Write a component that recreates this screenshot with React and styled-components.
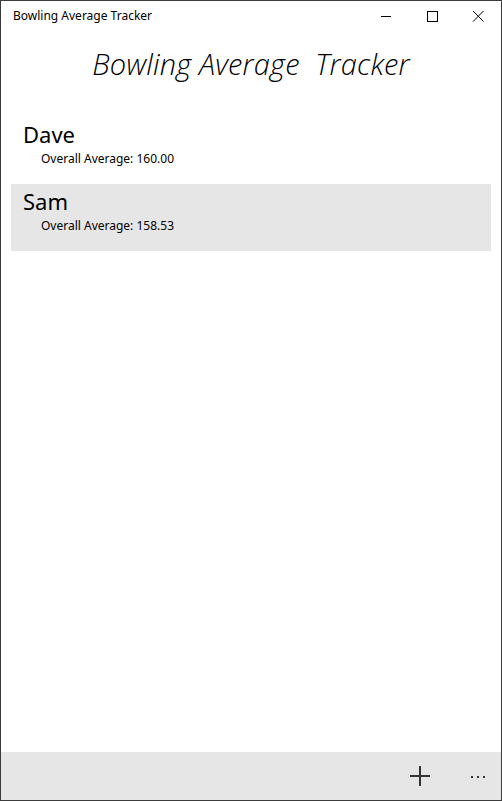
import React from 'react';
import styled, { createGlobalStyle } from 'styled-components';

const GlobalStyle = createGlobalStyle`
    html, body {
        margin: 0;
        padding: 0;
        background: #ffffff;
    }
    body {
        font-family: "Noto Sans", "Open Sans", "Liberation Sans", sans-serif;
        color: #000;
    }
`;

const players = [
    { name: 'Dave', average: '160.00', selected: false },
    { name: 'Sam', average: '158.53', selected: true },
];

function App() {
    return (
        <>
            <GlobalStyle />
            <Window>
                <TitleBar>
                    <WindowTitle>Bowling Average Tracker</WindowTitle>
                    <Controls>
                        <ControlButton>
                            <svg width="12" height="12" viewBox="0 0 12 12">
                                <path d="M1 6.5h10" stroke="#000" strokeWidth="1" />
                            </svg>
                        </ControlButton>
                        <ControlButton>
                            <svg width="12" height="12" viewBox="0 0 12 12">
                                <rect x="1.5" y="1.5" width="10" height="10" fill="none" stroke="#000" strokeWidth="1" />
                            </svg>
                        </ControlButton>
                        <ControlButton>
                            <svg width="12" height="12" viewBox="0 0 12 12">
                                <path d="M1 1l10.5 10.5M11.5 1L1 11.5" stroke="#000" strokeWidth="1" />
                            </svg>
                        </ControlButton>
                    </Controls>
                </TitleBar>
                <Main>
                    <Heading>Bowling Average&nbsp; Tracker</Heading>
                    <PlayerList>
                        {players.map((p) => (
                            <PlayerItem key={p.name} $selected={p.selected}>
                                <PlayerName>{p.name}</PlayerName>
                                <PlayerAverage>Overall Average: {p.average}</PlayerAverage>
                            </PlayerItem>
                        ))}
                    </PlayerList>
                </Main>
                <CommandBar>
                    <CommandButton>
                        <svg width="20" height="20" viewBox="0 0 20 20">
                            <path d="M10 0v20M0 10h20" stroke="#333" strokeWidth="2" />
                        </svg>
                    </CommandButton>
                    <MoreButton>
                        <Dot /><Dot /><Dot />
                    </MoreButton>
                </CommandBar>
            </Window>
        </>
    );
}

const Window = styled.div`
    box-sizing: border-box;
    width: 502px;
    height: 801px;
    border: 1px solid #3c3c3c;
    display: flex;
    flex-direction: column;
    background: #fff;
`;

const TitleBar = styled.div`
    height: 31px;
    display: flex;
    align-items: center;
    justify-content: space-between;
    padding-left: 12px;
`;

const WindowTitle = styled.span`
    font-size: 12px;
    line-height: 1;
    margin-top: -1px;
`;

const Controls = styled.div`
    display: flex;
    height: 100%;
`;

const ControlButton = styled.div`
    width: 46px;
    height: 100%;
    display: flex;
    align-items: center;
    justify-content: center;
    padding-bottom: 1px;
    box-sizing: border-box;
`;

const Main = styled.div`
    flex: 1;
    display: flex;
    flex-direction: column;
`;

const Heading = styled.h1`
    margin: 12px 0 0;
    font-size: 29px;
    font-weight: 300;
    font-style: italic;
    text-align: center;
    line-height: 40px;
    letter-spacing: 0.2px;
    font-family: "Open Sans", "Noto Sans", sans-serif;
`;

const PlayerList = styled.ul`
    list-style: none;
    margin: 33px 0 0;
    padding: 0 10px;
`;

const PlayerItem = styled.li`
    height: 67px;
    box-sizing: border-box;
    padding: 2px 12px 0;
    background: ${(p) => (p.$selected ? '#e6e6e6' : 'transparent')};
`;

const PlayerName = styled.div`
    font-size: 22px;
    line-height: 31px;
`;

const PlayerAverage = styled.div`
    font-size: 12px;
    line-height: 16px;
    margin-top: 1px;
    padding-left: 18px;
`;

const CommandBar = styled.div`
    height: 48px;
    background: #e6e6e6;
    display: flex;
    justify-content: flex-end;
    align-items: center;
`;

const CommandButton = styled.div`
    width: 48px;
    height: 48px;
    margin-right: 11px;
    display: flex;
    align-items: center;
    justify-content: center;
`;

const MoreButton = styled.div`
    width: 46px;
    height: 48px;
    display: flex;
    align-items: center;
    justify-content: center;
    gap: 4px;
    padding-top: 2px;
    box-sizing: border-box;
`;

const Dot = styled.span`
    width: 2px;
    height: 2px;
    background: #333;
`;

export default App;
